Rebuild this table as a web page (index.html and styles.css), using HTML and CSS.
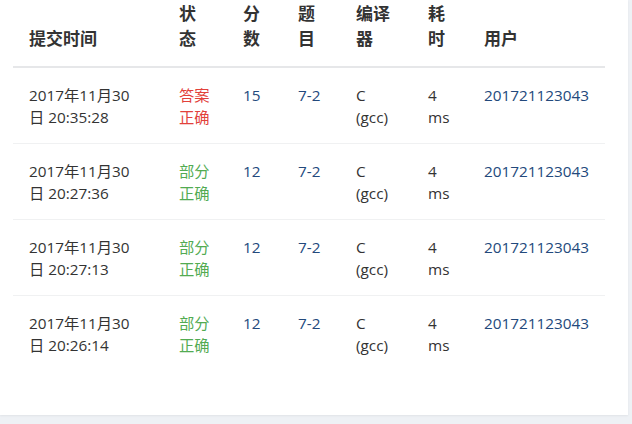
FILE: index.html
```html
<!DOCTYPE html>
<html lang="zh">
<head>
<meta charset="utf-8">
<link rel="stylesheet" href="styles.css">
</head>
<body>
<div class="card">
  <table class="subs">
    <colgroup>
      <col class="c-time"><col class="c-status"><col class="c-score"><col class="c-prob"><col class="c-comp"><col class="c-cost"><col class="c-user">
    </colgroup>
    <thead>
      <tr>
        <th>提交时间</th><th>状态</th><th>分数</th><th>题目</th><th>编译器</th><th>耗时</th><th>用户</th>
      </tr>
    </thead>
    <tbody>
      <tr>
        <td>2017年11月30日 20:35:28</td><td class="ok">答案正确</td><td class="link">15</td><td class="link">7-2</td><td>C (gcc)</td><td>4 ms</td><td class="link">201721123043</td>
      </tr>
      <tr>
        <td>2017年11月30日 20:27:36</td><td class="part">部分正确</td><td class="link">12</td><td class="link">7-2</td><td>C (gcc)</td><td>4 ms</td><td class="link">201721123043</td>
      </tr>
      <tr>
        <td>2017年11月30日 20:27:13</td><td class="part">部分正确</td><td class="link">12</td><td class="link">7-2</td><td>C (gcc)</td><td>4 ms</td><td class="link">201721123043</td>
      </tr>
      <tr>
        <td>2017年11月30日 20:26:14</td><td class="part">部分正确</td><td class="link">12</td><td class="link">7-2</td><td>C (gcc)</td><td>4 ms</td><td class="link">201721123043</td>
      </tr>
    </tbody>
  </table>
</div>
</body>
</html>
```
FILE: styles.css
```css
html, body {
  margin: 0;
  padding: 0;
  background: #eef1f5;
}
body {
  font-family: "Open Sans", "Noto Sans CJK SC", sans-serif;
  color: #333;
  font-size: 15px;
  width: 632px;
  height: 424px;
  overflow: hidden;
}
.card {
  width: 628px;
  height: 415px;
  background: #fff;
  padding: 0 0 0 13px;
  box-sizing: border-box;
  box-shadow: 0 1px 2px rgba(0,0,0,0.06);
}
.subs {
  width: 592px;
  table-layout: fixed;
  border-collapse: collapse;
}
.c-time { width: 150px; }
.c-status { width: 64px; }
.c-score { width: 55px; }
.c-prob { width: 58px; }
.c-comp { width: 72px; }
.c-cost { width: 56px; }
.c-user { width: 137px; }
.subs th {
  text-align: left;
  vertical-align: bottom;
  font-weight: bold;
  font-size: 17px;
  line-height: 25px;
  padding: 1px 16px 15px 16px;
  color: #333;
  border-bottom: 2px solid #e6e7e9;
}
.subs th:first-child, .subs td:first-child { padding-right: 29px; }
.subs td {
  text-align: left;
  vertical-align: top;
  font-size: 15.3px;
  line-height: 22px;
  padding: 16px 16px 15px 16px;
  border-bottom: 1px solid #f0f1f2;
  color: #333;
}
.subs th:last-child, .subs td:last-child { padding-right: 0; }
.subs tbody tr:last-child td { border-bottom: none; }
.subs td.ok { color: #e2413b; }
.subs td.part { color: #52ab52; }
.subs td.link { color: #23497c; }
```
